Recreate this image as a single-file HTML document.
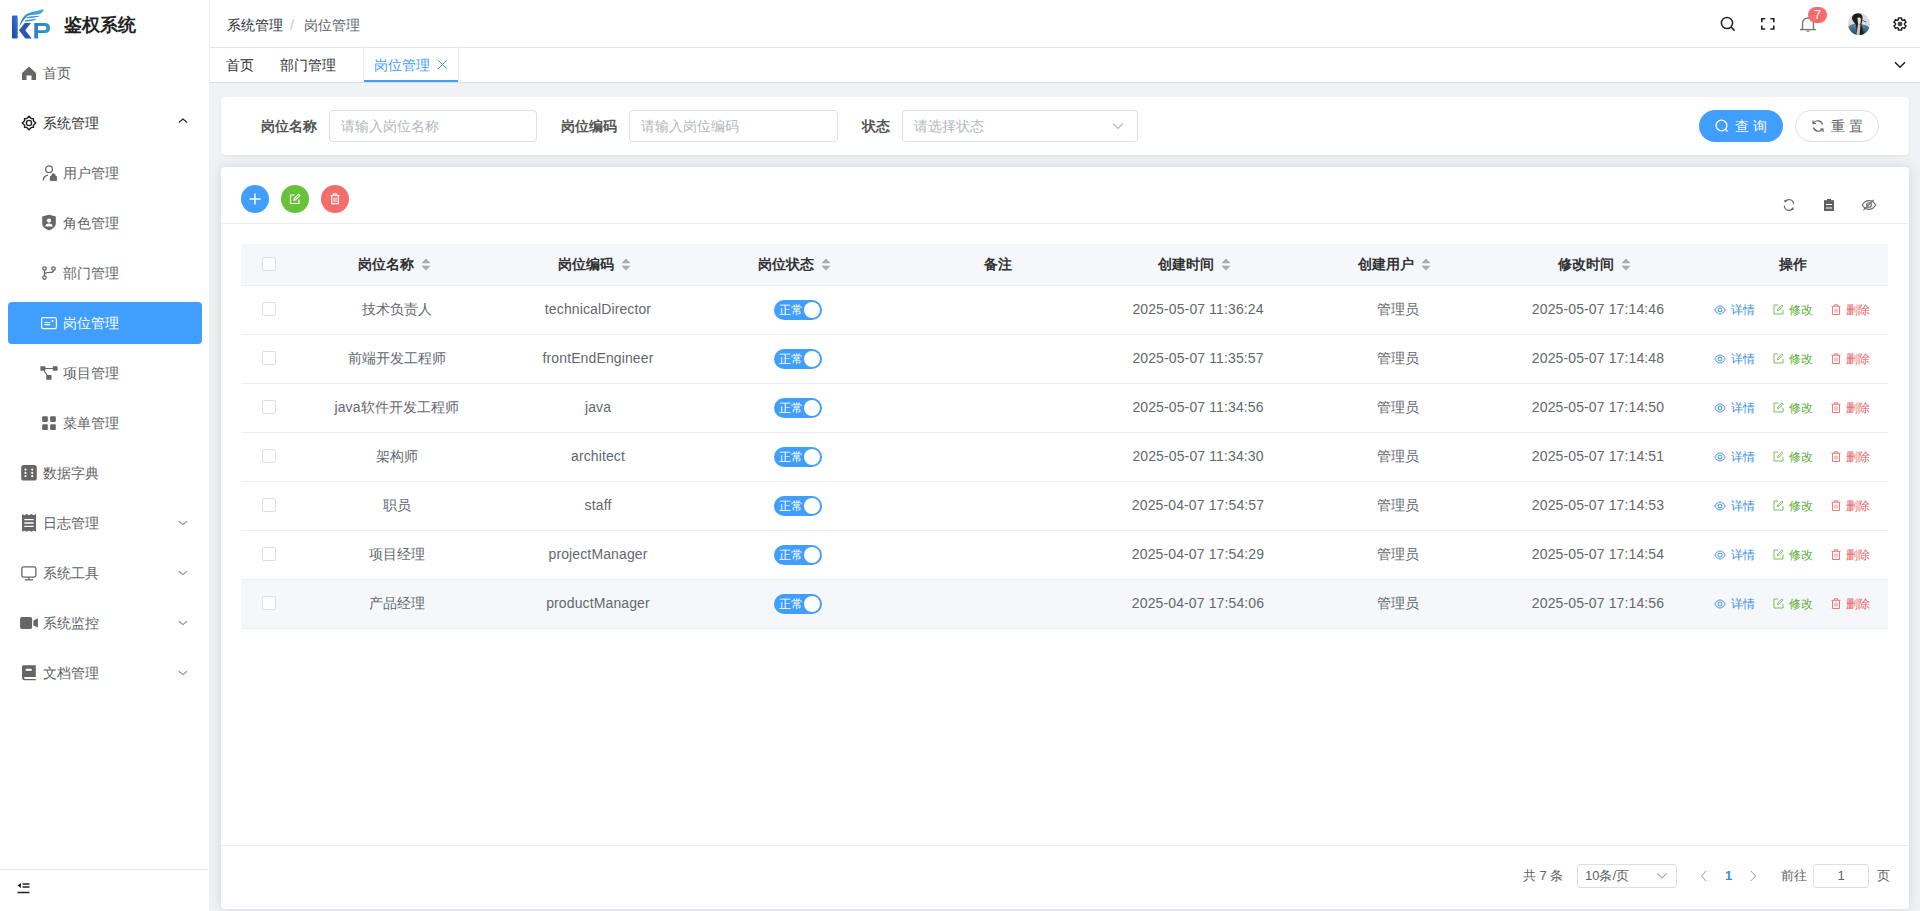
<!DOCTYPE html>
<html><head><meta charset="utf-8">
<style>
*{box-sizing:border-box;margin:0;padding:0}
html,body{width:1920px;height:911px;overflow:hidden;background:#f0f2f5;font-family:"Liberation Sans",sans-serif;color:#606266;font-size:14px}
.abs{position:absolute}
#side{position:absolute;left:0;top:0;width:210px;height:911px;background:#fff;border-right:1px solid #eef0f2}
.logo-t{position:absolute;left:64px;top:12px;font-size:18px;font-weight:bold;color:#222;line-height:26px;letter-spacing:0}
.mi{position:absolute;left:0;width:209px;height:50px;line-height:50px;color:#606266;font-size:14px}
.mi .ic{position:absolute;top:18px;width:15px;height:15px}
.mi .tx{position:absolute;top:0}
.mi .ar{position:absolute;left:176px;top:20px;width:12px;height:10px}
.mi.act .bg{position:absolute;left:8px;top:4px;width:194px;height:42px;background:#409eff;border-radius:4px}
#hdr{position:absolute;left:210px;top:0;width:1711px;height:48px;background:#fff;border-bottom:1px solid #e6e6e6}
#tabs{position:absolute;left:210px;top:48px;width:1711px;height:35px;background:#fff;border-bottom:1px solid #dcdfe6}
.tab{position:absolute;top:0;height:34px;line-height:36px;font-size:14px;color:#303133}
.card{position:absolute;left:221px;width:1688px;background:#fff;border-radius:4px;box-shadow:0 0 10px rgba(0,0,0,.07)}
.lbl{position:absolute;top:117px;font-weight:bold;color:#555;font-size:14px;line-height:18px}
.inp{position:absolute;top:110px;height:32px;border:1px solid #dcdfe6;border-radius:4px;background:#fff;color:#b4b7bd;font-size:14px;line-height:30px;padding-left:11px}
.btn{position:absolute;top:110px;height:32px;border-radius:16px;font-size:14px;line-height:30px}
.circ{position:absolute;top:185px;width:28px;height:28px;border-radius:50%}
table{border-collapse:collapse}
.th{position:absolute;left:241px;top:244px;width:1647px;height:41px;background:#f5f7fa;border-bottom:1px solid #ebeef5}
.row{position:absolute;left:241px;width:1647px;height:49px;border-bottom:1px solid #ebeef5}
.c{position:absolute;top:0;text-align:center;white-space:nowrap}
.th .c{font-weight:bold;color:#333;line-height:41px}
.row .c{line-height:48px;color:#606266}
.cb{position:absolute;left:21px;width:14px;height:14px;border:1px solid #dcdfe6;border-radius:2px;background:#fff}
.sw{position:absolute;top:16px;left:78px;width:48px;height:18px;border-radius:9px;background:#409eff}
.sw .knob{position:absolute;right:1px;top:1px;width:16px;height:16px;border-radius:50%;background:#fff}
.sw .t{position:absolute;left:5px;top:0;line-height:18px;font-size:12px;color:#fff}
.op{position:absolute;top:0;line-height:48px;font-size:12px}
</style></head><body>

<!-- SIDEBAR -->
<div id="side">
  <svg class="abs" style="left:8px;top:4px" width="48" height="40" viewBox="0 0 48 40">
    <defs><linearGradient id="lg1" x1="0" y1="1" x2="1" y2="0"><stop offset="0" stop-color="#1f3fa6"/><stop offset="1" stop-color="#2f7fcf"/></linearGradient>
    <linearGradient id="lg2" x1="0" y1="1" x2="1" y2="0"><stop offset="0" stop-color="#2a73c9"/><stop offset="1" stop-color="#3cb6dc"/></linearGradient>
    <linearGradient id="lg3" x1="0" y1="0" x2="1" y2="0"><stop offset="0" stop-color="#2b7cc8"/><stop offset="1" stop-color="#2aa0d2"/></linearGradient></defs>
    <rect x="4" y="11.6" width="5.7" height="22.9" rx="1.2" fill="url(#lg1)"/>
    <path d="M16.7 18.9 H22.8 L17.3 26.3 L23.7 34.5 H17.3 L11 26.3 Z" fill="#2a55b3"/>
    <path d="M11.3 22.5 C13 16 15.5 11 21 9 C26 7.2 31 6.5 35.8 5 C35 8.5 33 10 29 10.6 C25 11 21 11.2 19 12.4 C16 15 13.5 19 11.3 22.5 Z" fill="url(#lg2)"/>
    <path d="M18.8 13.2 C22 12.2 27 12 32 11.8 C30.5 13.2 27 13.8 22 14 C20.5 14.1 19.5 14.3 18.8 14.6 Z" fill="#3a9fd8"/>
    <path d="M17.2 16.3 C20 15.6 24 15.3 28.5 15.2 C27.5 16.3 24 17 19 17.4 L16.6 17.6 Z" fill="#2f8fd2"/>
    <path d="M26.3 18.9 H36.5 C40.2 18.9 42.2 20.8 42.2 24 C42.2 27.2 40.2 29 36.5 29 H30.1 V34.5 H26.3 Z M30.1 21.9 V26.2 H36.4 C37.8 26.2 38.3 25.3 38.3 24 C38.3 22.7 37.8 21.9 36.4 21.9 Z" fill="url(#lg3)" fill-rule="evenodd"/>
  </svg>
  <div class="logo-t">鉴权系统</div>
<div class="mi" style="top:48px"><svg class="abs" style="left:21px;top:17px" width="16" height="16" viewBox="0 0 16 16"><path d="M1 8 L8 1.5 L15 8 V15 H10.5 V10.5 H5.5 V15 H1 Z" fill="#666"/></svg><span class="tx" style="left:43px;color:#606266">首页</span></div>
<div class="mi" style="top:98px"><svg class="abs" style="left:21px;top:17px" width="16" height="16" viewBox="0 0 16 16"><g fill="none" stroke="#222" stroke-width="1.4"><path d="M8 1.3 L10.3 3.6 H12.4 V5.7 L14.7 8 L12.4 10.3 V12.4 H10.3 L8 14.7 L5.7 12.4 H3.6 V10.3 L1.3 8 L3.6 5.7 V3.6 H5.7 Z"/><circle cx="8" cy="8" r="2.6"/></g></svg><span class="tx" style="left:43px;color:#303133">系统管理</span><svg class="abs" style="left:176px;top:20px" width="14" height="10" viewBox="0 0 14 10"><path d="M2.8 4.5 L7 1 L11 4.5" fill="none" stroke="#222" stroke-width="1.1"/></svg></div>
<div class="mi" style="top:148px"><svg class="abs" style="left:42px;top:17px" width="16" height="16" viewBox="0 0 16 16"><g fill="none" stroke="#666" stroke-width="1.3"><circle cx="7" cy="4.3" r="3.4"/><path d="M1.2 15.5 C1.5 12 3.5 10.6 6 10.2"/></g><path d="M8.3 11.5 h6.2 v4.2 h-6.2 z M9.6 11.5 v-1 a1.8 1.8 0 0 1 3.6 0 v1" fill="#666" stroke="#666" stroke-width="0.9"/></svg><span class="tx" style="left:63px;color:#606266">用户管理</span></div>
<div class="mi" style="top:198px"><svg class="abs" style="left:42px;top:16px" width="14" height="17" viewBox="0 0 14 17"><path d="M7 0.8 L13.8 2.6 V9.5 C13.8 12.8 10.5 15 7 16.4 C3.5 15 0.2 12.8 0.2 9.5 V2.6 Z" fill="#666"/><circle cx="7" cy="6.6" r="2.1" fill="#fff"/><path d="M3.3 12.4 C3.6 10.3 5 9.6 7 9.6 C9 9.6 10.4 10.3 10.7 12.4 Z" fill="#fff"/></svg><span class="tx" style="left:63px;color:#606266">角色管理</span></div>
<div class="mi" style="top:248px"><svg class="abs" style="left:41px;top:16px" width="16" height="18" viewBox="0 0 16 18"><g fill="none" stroke="#666" stroke-width="1.3"><circle cx="3.5" cy="4.5" r="1.7"/><circle cx="12.5" cy="4.5" r="1.7"/><circle cx="3.5" cy="13.6" r="1.7"/><path d="M3.5 6.2 V11.9 M3.5 9.8 C4.5 8.6 6 8.4 9 8.4 C11.5 8.4 12.5 7.5 12.5 6.2"/></g></svg><span class="tx" style="left:63px;color:#606266">部门管理</span></div>
<div class="mi act" style="top:298px"><div class="bg"></div><svg class="abs" style="left:41px;top:19px" width="16" height="13" viewBox="0 0 16 13"><g fill="none" stroke="#fff" stroke-width="1.2"><rect x="0.6" y="0.6" width="14.8" height="11" rx="1.6"/><path d="M3.4 5.5 H9.2 M3.4 7.6 H9.2"/></g><circle cx="11.5" cy="4.1" r="1" fill="#fff"/></svg><span class="tx" style="left:63px;color:#fff">岗位管理</span></div>
<div class="mi" style="top:348px"><svg class="abs" style="left:40px;top:18px" width="18" height="14" viewBox="0 0 18 14"><g fill="#666"><rect x="0.4" y="0.2" width="5" height="4.6" rx="0.6"/><rect x="12.8" y="0.2" width="4.8" height="4.6" rx="0.6"/><rect x="6.3" y="9" width="5.2" height="4.8" rx="0.6"/></g><path d="M5 2.5 H13 M4 4.5 L7 9" stroke="#666" stroke-width="1.1"/></svg><span class="tx" style="left:63px;color:#606266">项目管理</span></div>
<div class="mi" style="top:398px"><svg class="abs" style="left:42px;top:18px" width="14" height="15" viewBox="0 0 14 15"><g fill="#666"><rect x="0.2" y="0.3" width="5.6" height="5.6" rx="0.8"/><rect x="8.2" y="0.3" width="5.6" height="5.6" rx="0.8"/><rect x="0.2" y="8.3" width="5.6" height="5.7" rx="0.8"/><rect x="8.2" y="8.3" width="5.6" height="5.7" rx="0.8"/></g></svg><span class="tx" style="left:63px;color:#606266">菜单管理</span></div>
<div class="mi" style="top:448px"><svg class="abs" style="left:21px;top:17px" width="16" height="16" viewBox="0 0 16 16"><rect x="0.2" y="0.1" width="15.6" height="15.5" rx="2.6" fill="#666"/><g fill="#fff"><circle cx="4.5" cy="4.6" r="1.1"/><circle cx="11.2" cy="4.6" r="1.1"/><circle cx="4.5" cy="7.9" r="1.1"/><circle cx="11.2" cy="7.9" r="1.1"/><circle cx="4.5" cy="11.2" r="1.1"/><circle cx="11.2" cy="11.2" r="1.1"/></g></svg><span class="tx" style="left:43px;color:#606266">数据字典</span></div>
<div class="mi" style="top:498px"><svg class="abs" style="left:22px;top:16px" width="14" height="18" viewBox="0 0 14 18"><path d="M0 0 L2.3 1.3 L4.7 0 L7 1.3 L9.3 0 L11.7 1.3 L14 0 V17.7 L11.7 16.4 L9.3 17.7 L7 16.4 L4.7 17.7 L2.3 16.4 L0 17.7 Z" fill="#666"/><path d="M2.3 5.6 H11.7 M2.3 9 H11.7 M2.3 12.3 H11.7" stroke="#fff" stroke-width="1.3"/></svg><span class="tx" style="left:43px;color:#606266">日志管理</span><svg class="abs" style="left:176px;top:20px" width="14" height="10" viewBox="0 0 14 10"><path d="M2.8 3.3 L7 6.6 L11 3.1" fill="none" stroke="#888" stroke-width="1.1"/></svg></div>
<div class="mi" style="top:548px"><svg class="abs" style="left:21px;top:18px" width="16" height="15" viewBox="0 0 16 15"><g fill="none" stroke="#666" stroke-width="1.3"><rect x="0.85" y="0.85" width="14" height="10.2" rx="1.8"/><path d="M7.85 11 V13.6 M3.7 13.9 H12"/></g></svg><span class="tx" style="left:43px;color:#606266">系统工具</span><svg class="abs" style="left:176px;top:20px" width="14" height="10" viewBox="0 0 14 10"><path d="M2.8 3.3 L7 6.6 L11 3.1" fill="none" stroke="#888" stroke-width="1.1"/></svg></div>
<div class="mi" style="top:598px"><svg class="abs" style="left:20px;top:19px" width="18" height="12" viewBox="0 0 18 12"><rect x="0.1" y="0.1" width="12" height="11.8" rx="1.6" fill="#666"/><path d="M13.4 3.6 L17.9 1.3 V10.6 L13.4 8.4 Z" fill="#666"/></svg><span class="tx" style="left:43px;color:#606266">系统监控</span><svg class="abs" style="left:176px;top:20px" width="14" height="10" viewBox="0 0 14 10"><path d="M2.8 3.3 L7 6.6 L11 3.1" fill="none" stroke="#888" stroke-width="1.1"/></svg></div>
<div class="mi" style="top:648px"><svg class="abs" style="left:22px;top:17px" width="14" height="16" viewBox="0 0 14 16"><path d="M1.6 0.2 H13.8 V12 H3.5 C2.3 12 2.1 12.6 2.1 13 C2.1 13.5 2.4 13.9 3.4 13.9 H13.8 V15.2 H3 C1 15.2 0 14.2 0 12.5 V1.8 C0 0.8 0.6 0.2 1.6 0.2 Z" fill="#666"/><rect x="3.7" y="3.8" width="6" height="2" fill="#fff"/></svg><span class="tx" style="left:43px;color:#606266">文档管理</span><svg class="abs" style="left:176px;top:20px" width="14" height="10" viewBox="0 0 14 10"><path d="M2.8 3.3 L7 6.6 L11 3.1" fill="none" stroke="#888" stroke-width="1.1"/></svg></div>
<div class="abs" style="left:0;top:869px;width:208px;height:1px;background:#e6ebf2"></div><svg class="abs" style="left:16px;top:880px" width="16" height="16" viewBox="0 0 16 16"><path d="M1.5 5.5 L5 3 V8 Z" fill="#222"/><path d="M6.5 4 H13.5 M6.5 7 H13.5 M1.5 12.5 H13.5" stroke="#222" stroke-width="1.4"/></svg>
</div>

<!-- HEADER -->
<div id="hdr"></div>
<div id="tabs"></div>
<div class="abs" style="left:227px;top:15px;line-height:20px;font-size:14px;color:#303133">系统管理</div><div class="abs" style="left:290px;top:15px;line-height:20px;font-size:14px;color:#c0c4cc">/</div><div class="abs" style="left:304px;top:15px;line-height:20px;font-size:14px;color:#606266">岗位管理</div><svg class="abs" style="left:1720px;top:16px" width="16" height="16" viewBox="0 0 16 16"><circle cx="7" cy="7" r="5.6" fill="none" stroke="#222" stroke-width="1.5"/><path d="M11 11 L14.6 14.6" stroke="#222" stroke-width="1.6"/></svg><svg class="abs" style="left:1760px;top:17px" width="16" height="14" viewBox="0 0 16 14"><path d="M1.8 5.2 V1.8 H5.2 M10.4 1.8 H13.8 V5.2 M13.8 8.6 V12 H10.4 M5.2 12 H1.8 V8.6" fill="none" stroke="#222" stroke-width="1.6"/></svg><svg class="abs" style="left:1799px;top:15px" width="18" height="18" viewBox="0 0 18 18"><path d="M3.5 14.5 V8.5 C3.5 5.2 5.8 3 9 3 C12.2 3 14.5 5.2 14.5 8.5 V14.5" fill="none" stroke="#777" stroke-width="1.4"/><path d="M1 14.6 H17" stroke="#777" stroke-width="1.4"/><path d="M7.6 16.2 H10.4" stroke="#777" stroke-width="1.2"/></svg><div class="abs" style="left:1808px;top:7px;width:19px;height:16px;border-radius:8px;background:#f56c6c;color:#fff;font-size:12px;line-height:16px;text-align:center">7</div><svg class="abs" style="left:1848px;top:13px" width="22" height="22" viewBox="0 0 22 22"><defs><clipPath id="av"><circle cx="11" cy="11" r="11"/></clipPath><linearGradient id="coat" x1="0" y1="0" x2="0" y2="1"><stop offset="0" stop-color="#5b8ea3"/><stop offset="1" stop-color="#24475a"/></linearGradient></defs><g clip-path="url(#av)"><rect width="22" height="22" fill="#dcdedd"/><path d="M0 14 C2 11.5 5 11 8 11 L15 11.5 C18 12 21 13 22 16 V22 H0 Z" fill="url(#coat)"/><path d="M4 5.5 C4 2 7 0 10.5 0.3 C13.5 0.6 15 2.5 14.5 6 L13.5 11 L16 22 H9 L8 12 C6.5 10 4.5 8 4 5.5 Z" fill="#1e1e1e"/><path d="M9.5 5 C10.5 4.2 12.5 4.5 13 6 L12.5 10 C12 11.5 10.5 11.5 10 10.5 Z" fill="#e6e2d8"/><path d="M10 11 L12.5 11.5 L11.5 22 H8.5 Z" fill="#cfcbbd"/><path d="M13 7 C15 7.5 17 8.5 18.5 9" stroke="#333" stroke-width="0.7" fill="none"/></g></svg><svg class="abs" style="left:1892px;top:16px" width="16" height="16" viewBox="0 0 16 16"><path d="M6.28 3.73 L6.48 1.89 L9.52 1.89 L9.72 3.73 L10.83 4.38 L12.53 3.62 L14.06 6.26 L12.56 7.36 L12.56 8.64 L14.06 9.74 L12.53 12.38 L10.83 11.62 L9.72 12.27 L9.52 14.11 L6.48 14.11 L6.28 12.27 L5.17 11.62 L3.47 12.38 L1.94 9.74 L3.44 8.64 L3.44 7.36 L1.94 6.26 L3.47 3.62 L5.17 4.38 Z" fill="none" stroke="#222" stroke-width="1.5" stroke-linejoin="round"/><circle cx="8" cy="8" r="1.9" fill="#444" stroke="#222" stroke-width="0.8"/></svg>
<div class="abs" style="left:226px;top:55px;line-height:20px;font-size:14px;color:#303133">首页</div><div class="abs" style="left:280px;top:55px;line-height:20px;font-size:14px;color:#303133">部门管理</div><div class="abs" style="left:363px;top:47px;width:96px;height:35px;border-left:1px solid #eef0f3;border-right:1px solid #eef0f3"></div><div class="abs" style="left:374px;top:55px;line-height:20px;font-size:14px;color:#409eff">岗位管理</div><svg class="abs" style="left:437px;top:59px" width="11" height="11" viewBox="0 0 11 11"><path d="M1.2 1.2 L9.8 9.8 M9.8 1.2 L1.2 9.8" stroke="#3f92e6" stroke-width="1"/></svg><div class="abs" style="left:364px;top:80px;width:94px;height:2px;background:#409eff"></div><svg class="abs" style="left:1893px;top:60px" width="14" height="10" viewBox="0 0 14 10"><path d="M2 2.2 L7 7.2 L12 2.2" fill="none" stroke="#222" stroke-width="1.6"/></svg>

<div class="card" style="top:97px;height:58px;box-shadow:0 1px 3px rgba(0,0,0,.07)"></div><div class="card" style="top:167px;height:742px;box-shadow:0 0 14px rgba(0,0,0,.12)"></div><div class="lbl" style="left:261px">岗位名称</div><div class="inp" style="left:329px;width:208px">请输入岗位名称</div><div class="lbl" style="left:561px">岗位编码</div><div class="inp" style="left:629px;width:209px">请输入岗位编码</div><div class="lbl" style="left:862px">状态</div><div class="inp" style="left:902px;width:236px">请选择状态</div><svg class="abs" style="left:1111px;top:120px" width="14" height="12" viewBox="0 0 14 12"><path d="M2 3.5 L7 8.5 L12 3.5" fill="none" stroke="#b4b7bd" stroke-width="1.1"/></svg><div class="btn" style="left:1699px;width:84px;background:#409eff;color:#fff"></div><svg class="abs" style="left:1714px;top:118px" width="16" height="16" viewBox="0 0 16 16"><circle cx="7.5" cy="7.5" r="5.4" fill="none" stroke="#fff" stroke-width="1.3"/><path d="M11.3 11.3 L13.5 13.5" stroke="#fff" stroke-width="1.3"/></svg><div class="abs" style="left:1735px;top:116px;line-height:20px;font-size:14px;color:#fff;letter-spacing:4px">查询</div><div class="btn" style="left:1795px;width:84px;background:#fff;border:1px solid #dcdfe6"></div><svg class="abs" style="left:1810px;top:118px" width="16" height="16" viewBox="0 0 16 16"><path d="M12.5 6.5 A5 5 0 0 0 3.5 5 M3.5 9.5 A5 5 0 0 0 12.5 11" fill="none" stroke="#606266" stroke-width="1.2"/><path d="M3 2.5 V5.5 H6" fill="none" stroke="#606266" stroke-width="1.2"/><path d="M13 14 V11 H10" fill="none" stroke="#606266" stroke-width="1.2"/></svg><div class="abs" style="left:1831px;top:116px;line-height:20px;font-size:14px;color:#606266;letter-spacing:4px">重置</div><div class="circ" style="left:241px;background:#409eff"></div><svg class="abs" style="left:248px;top:192px" width="14" height="14" viewBox="0 0 14 14"><path d="M7 1.5 V12.5 M1.5 7 H12.5" stroke="#fff" stroke-width="1.4"/></svg><div class="circ" style="left:281px;background:#67c23a"></div><svg class="abs" style="left:289px;top:193px" width="12" height="12" viewBox="0 0 12 12"><path d="M5.5 2 H1.5 V10.5 H10 V6.5" fill="none" stroke="#fff" stroke-width="1.2"/><path d="M5 7.2 L5.3 5.5 L9.5 1.3 L10.8 2.6 L6.6 6.8 Z" fill="none" stroke="#fff" stroke-width="1.1"/></svg><div class="circ" style="left:321px;background:#f56c6c"></div><svg class="abs" style="left:329px;top:192px" width="12" height="14" viewBox="0 0 12 14"><path d="M1.5 3.5 H10.5 M4.5 3.2 V1.8 H7.5 V3.2" fill="none" stroke="#fff" stroke-width="1.2"/><path d="M2.7 4 V11.6 H9.3 V4" fill="none" stroke="#fff" stroke-width="1.2"/><path d="M5 5.5 V10 M7 5.5 V10" stroke="#fff" stroke-width="1"/></svg><svg class="abs" style="left:1782px;top:197px" width="14" height="16" viewBox="0 0 14 16"><path d="M3.2 4.6 A4.6 4.6 0 0 1 11.6 7.2 M10.8 11.4 A4.6 4.6 0 0 1 2.4 8.6" fill="none" stroke="#666" stroke-width="1.2"/><path d="M2 3 L5.2 3.6 L3 6 Z" fill="#666"/><path d="M12 13 L8.8 12.4 L11 10 Z" fill="#666"/></svg><svg class="abs" style="left:1822px;top:197px" width="14" height="16" viewBox="0 0 14 16"><path d="M2 3.2 H12 V14 H2 Z" fill="#5f6063"/><rect x="5" y="2" width="4" height="2" fill="#5f6063"/><path d="M4 7.5 H10 M4 11 H10" stroke="#fff" stroke-width="1.1"/></svg><svg class="abs" style="left:1860px;top:197px" width="18" height="16" viewBox="0 0 18 16"><path d="M2.2 8 C4 5 6 3.6 9 3.6 C12 3.6 14 5 15.8 8 C14 11 12 12.4 9 12.4 C6 12.4 4 11 2.2 8 Z" fill="none" stroke="#666" stroke-width="1.1"/><circle cx="9" cy="8" r="2.3" fill="none" stroke="#666" stroke-width="1.1"/><path d="M3.5 13 L13.8 2.8" stroke="#666" stroke-width="1.1"/></svg><div class="abs" style="left:221px;top:223px;width:1688px;height:1px;background:#ebeef5"></div>
<div class="abs" style="left:241px;top:244px;width:1647px;height:42px;background:#f5f7fa;border-bottom:1px solid #ebeef5"></div><div class="cb" style="left:262px;top:257px"></div><div class="abs" style="left:358.0px;top:254px;line-height:20px;font-weight:bold;color:#303133;font-size:14px">岗位名称<svg width="10" height="13" viewBox="0 0 10 13" style="position:absolute;left:63px;top:4px"><path d="M5 0.5 L9.5 5.3 H0.5 Z M5 12.5 L9.5 7.7 H0.5 Z" fill="#a8abb2"/></svg></div><div class="abs" style="left:558.0px;top:254px;line-height:20px;font-weight:bold;color:#303133;font-size:14px">岗位编码<svg width="10" height="13" viewBox="0 0 10 13" style="position:absolute;left:63px;top:4px"><path d="M5 0.5 L9.5 5.3 H0.5 Z M5 12.5 L9.5 7.7 H0.5 Z" fill="#a8abb2"/></svg></div><div class="abs" style="left:758.0px;top:254px;line-height:20px;font-weight:bold;color:#303133;font-size:14px">岗位状态<svg width="10" height="13" viewBox="0 0 10 13" style="position:absolute;left:63px;top:4px"><path d="M5 0.5 L9.5 5.3 H0.5 Z M5 12.5 L9.5 7.7 H0.5 Z" fill="#a8abb2"/></svg></div><div class="abs" style="left:984.0px;top:254px;line-height:20px;font-weight:bold;color:#303133;font-size:14px">备注</div><div class="abs" style="left:1158.0px;top:254px;line-height:20px;font-weight:bold;color:#303133;font-size:14px">创建时间<svg width="10" height="13" viewBox="0 0 10 13" style="position:absolute;left:63px;top:4px"><path d="M5 0.5 L9.5 5.3 H0.5 Z M5 12.5 L9.5 7.7 H0.5 Z" fill="#a8abb2"/></svg></div><div class="abs" style="left:1358.0px;top:254px;line-height:20px;font-weight:bold;color:#303133;font-size:14px">创建用户<svg width="10" height="13" viewBox="0 0 10 13" style="position:absolute;left:63px;top:4px"><path d="M5 0.5 L9.5 5.3 H0.5 Z M5 12.5 L9.5 7.7 H0.5 Z" fill="#a8abb2"/></svg></div><div class="abs" style="left:1558.0px;top:254px;line-height:20px;font-weight:bold;color:#303133;font-size:14px">修改时间<svg width="10" height="13" viewBox="0 0 10 13" style="position:absolute;left:63px;top:4px"><path d="M5 0.5 L9.5 5.3 H0.5 Z M5 12.5 L9.5 7.7 H0.5 Z" fill="#a8abb2"/></svg></div><div class="abs" style="left:1779.0px;top:254px;line-height:20px;font-weight:bold;color:#303133;font-size:14px">操作</div><div class="abs" style="left:241px;top:286px;width:1647px;height:49px;background:#fff;border-bottom:1px solid #ebeef5"></div><div class="cb" style="left:262px;top:302px"></div><div class="abs" style="left:297px;top:299px;width:200px;line-height:20px;text-align:center;color:#65686d;font-size:14px;white-space:nowrap;letter-spacing:0.12px">技术负责人</div><div class="abs" style="left:498px;top:299px;width:200px;line-height:20px;text-align:center;color:#65686d;font-size:14px;white-space:nowrap;letter-spacing:0.12px">technicalDirector</div><div class="abs" style="left:1098px;top:299px;width:200px;line-height:20px;text-align:center;color:#65686d;font-size:14px;white-space:nowrap;letter-spacing:0.12px">2025-05-07 11:36:24</div><div class="abs" style="left:1298px;top:299px;width:200px;line-height:20px;text-align:center;color:#65686d;font-size:14px;white-space:nowrap;letter-spacing:0.12px">管理员</div><div class="abs" style="left:1498px;top:299px;width:200px;line-height:20px;text-align:center;color:#65686d;font-size:14px;white-space:nowrap;letter-spacing:0.12px">2025-05-07 17:14:46</div><div class="abs" style="left:774px;top:300px;width:48px;height:20px;border-radius:10px;background:#409eff"><span style="position:absolute;left:5px;top:2px;line-height:16px;font-size:12px;color:#fff">正常</span><span style="position:absolute;right:2px;top:2px;width:16px;height:16px;border-radius:50%;background:#fff"></span></div><svg class="abs" style="left:1714px;top:305px" width="12" height="10" viewBox="0 0 12 10"><path d="M0.8 5 C2.3 2.3 4 1 6 1 C8 1 9.7 2.3 11.2 5 C9.7 7.7 8 9 6 9 C4 9 2.3 7.7 0.8 5 Z" fill="none" stroke="#3f92e6" stroke-width="1"/><circle cx="6" cy="5" r="2" fill="none" stroke="#3f92e6" stroke-width="1"/></svg><div class="abs" style="left:1731px;top:301px;line-height:18px;font-size:12px;color:#3a8ee0">详情</div><svg class="abs" style="left:1773px;top:304px" width="11" height="11" viewBox="0 0 11 11"><path d="M5 1 H1 V10 H10 V6" fill="none" stroke="#6ab847" stroke-width="0.9"/><path d="M4.5 6.5 L4.8 5 L8.8 1 L10 2.2 L6 6.2 Z" fill="none" stroke="#6ab847" stroke-width="0.9"/></svg><div class="abs" style="left:1789px;top:301px;line-height:18px;font-size:12px;color:#5cae38">修改</div><svg class="abs" style="left:1831px;top:304px" width="10" height="11" viewBox="0 0 10 11"><path d="M0.5 2.3 H9.5 M3.3 2 V0.8 H6.7 V2" fill="none" stroke="#e86a6a" stroke-width="0.9"/><path d="M1.5 2.5 V10.5 H8.5 V2.5" fill="none" stroke="#e86a6a" stroke-width="0.9"/><path d="M4 4.5 V8.5 M6 4.5 V8.5" stroke="#e86a6a" stroke-width="0.8"/></svg><div class="abs" style="left:1846px;top:301px;line-height:18px;font-size:12px;color:#e46262">删除</div><div class="abs" style="left:241px;top:335px;width:1647px;height:49px;background:#fff;border-bottom:1px solid #ebeef5"></div><div class="cb" style="left:262px;top:351px"></div><div class="abs" style="left:297px;top:348px;width:200px;line-height:20px;text-align:center;color:#65686d;font-size:14px;white-space:nowrap;letter-spacing:0.12px">前端开发工程师</div><div class="abs" style="left:498px;top:348px;width:200px;line-height:20px;text-align:center;color:#65686d;font-size:14px;white-space:nowrap;letter-spacing:0.12px">frontEndEngineer</div><div class="abs" style="left:1098px;top:348px;width:200px;line-height:20px;text-align:center;color:#65686d;font-size:14px;white-space:nowrap;letter-spacing:0.12px">2025-05-07 11:35:57</div><div class="abs" style="left:1298px;top:348px;width:200px;line-height:20px;text-align:center;color:#65686d;font-size:14px;white-space:nowrap;letter-spacing:0.12px">管理员</div><div class="abs" style="left:1498px;top:348px;width:200px;line-height:20px;text-align:center;color:#65686d;font-size:14px;white-space:nowrap;letter-spacing:0.12px">2025-05-07 17:14:48</div><div class="abs" style="left:774px;top:349px;width:48px;height:20px;border-radius:10px;background:#409eff"><span style="position:absolute;left:5px;top:2px;line-height:16px;font-size:12px;color:#fff">正常</span><span style="position:absolute;right:2px;top:2px;width:16px;height:16px;border-radius:50%;background:#fff"></span></div><svg class="abs" style="left:1714px;top:354px" width="12" height="10" viewBox="0 0 12 10"><path d="M0.8 5 C2.3 2.3 4 1 6 1 C8 1 9.7 2.3 11.2 5 C9.7 7.7 8 9 6 9 C4 9 2.3 7.7 0.8 5 Z" fill="none" stroke="#3f92e6" stroke-width="1"/><circle cx="6" cy="5" r="2" fill="none" stroke="#3f92e6" stroke-width="1"/></svg><div class="abs" style="left:1731px;top:350px;line-height:18px;font-size:12px;color:#3a8ee0">详情</div><svg class="abs" style="left:1773px;top:353px" width="11" height="11" viewBox="0 0 11 11"><path d="M5 1 H1 V10 H10 V6" fill="none" stroke="#6ab847" stroke-width="0.9"/><path d="M4.5 6.5 L4.8 5 L8.8 1 L10 2.2 L6 6.2 Z" fill="none" stroke="#6ab847" stroke-width="0.9"/></svg><div class="abs" style="left:1789px;top:350px;line-height:18px;font-size:12px;color:#5cae38">修改</div><svg class="abs" style="left:1831px;top:353px" width="10" height="11" viewBox="0 0 10 11"><path d="M0.5 2.3 H9.5 M3.3 2 V0.8 H6.7 V2" fill="none" stroke="#e86a6a" stroke-width="0.9"/><path d="M1.5 2.5 V10.5 H8.5 V2.5" fill="none" stroke="#e86a6a" stroke-width="0.9"/><path d="M4 4.5 V8.5 M6 4.5 V8.5" stroke="#e86a6a" stroke-width="0.8"/></svg><div class="abs" style="left:1846px;top:350px;line-height:18px;font-size:12px;color:#e46262">删除</div><div class="abs" style="left:241px;top:384px;width:1647px;height:49px;background:#fff;border-bottom:1px solid #ebeef5"></div><div class="cb" style="left:262px;top:400px"></div><div class="abs" style="left:297px;top:397px;width:200px;line-height:20px;text-align:center;color:#65686d;font-size:14px;white-space:nowrap;letter-spacing:0.12px">java软件开发工程师</div><div class="abs" style="left:498px;top:397px;width:200px;line-height:20px;text-align:center;color:#65686d;font-size:14px;white-space:nowrap;letter-spacing:0.12px">java</div><div class="abs" style="left:1098px;top:397px;width:200px;line-height:20px;text-align:center;color:#65686d;font-size:14px;white-space:nowrap;letter-spacing:0.12px">2025-05-07 11:34:56</div><div class="abs" style="left:1298px;top:397px;width:200px;line-height:20px;text-align:center;color:#65686d;font-size:14px;white-space:nowrap;letter-spacing:0.12px">管理员</div><div class="abs" style="left:1498px;top:397px;width:200px;line-height:20px;text-align:center;color:#65686d;font-size:14px;white-space:nowrap;letter-spacing:0.12px">2025-05-07 17:14:50</div><div class="abs" style="left:774px;top:398px;width:48px;height:20px;border-radius:10px;background:#409eff"><span style="position:absolute;left:5px;top:2px;line-height:16px;font-size:12px;color:#fff">正常</span><span style="position:absolute;right:2px;top:2px;width:16px;height:16px;border-radius:50%;background:#fff"></span></div><svg class="abs" style="left:1714px;top:403px" width="12" height="10" viewBox="0 0 12 10"><path d="M0.8 5 C2.3 2.3 4 1 6 1 C8 1 9.7 2.3 11.2 5 C9.7 7.7 8 9 6 9 C4 9 2.3 7.7 0.8 5 Z" fill="none" stroke="#3f92e6" stroke-width="1"/><circle cx="6" cy="5" r="2" fill="none" stroke="#3f92e6" stroke-width="1"/></svg><div class="abs" style="left:1731px;top:399px;line-height:18px;font-size:12px;color:#3a8ee0">详情</div><svg class="abs" style="left:1773px;top:402px" width="11" height="11" viewBox="0 0 11 11"><path d="M5 1 H1 V10 H10 V6" fill="none" stroke="#6ab847" stroke-width="0.9"/><path d="M4.5 6.5 L4.8 5 L8.8 1 L10 2.2 L6 6.2 Z" fill="none" stroke="#6ab847" stroke-width="0.9"/></svg><div class="abs" style="left:1789px;top:399px;line-height:18px;font-size:12px;color:#5cae38">修改</div><svg class="abs" style="left:1831px;top:402px" width="10" height="11" viewBox="0 0 10 11"><path d="M0.5 2.3 H9.5 M3.3 2 V0.8 H6.7 V2" fill="none" stroke="#e86a6a" stroke-width="0.9"/><path d="M1.5 2.5 V10.5 H8.5 V2.5" fill="none" stroke="#e86a6a" stroke-width="0.9"/><path d="M4 4.5 V8.5 M6 4.5 V8.5" stroke="#e86a6a" stroke-width="0.8"/></svg><div class="abs" style="left:1846px;top:399px;line-height:18px;font-size:12px;color:#e46262">删除</div><div class="abs" style="left:241px;top:433px;width:1647px;height:49px;background:#fff;border-bottom:1px solid #ebeef5"></div><div class="cb" style="left:262px;top:449px"></div><div class="abs" style="left:297px;top:446px;width:200px;line-height:20px;text-align:center;color:#65686d;font-size:14px;white-space:nowrap;letter-spacing:0.12px">架构师</div><div class="abs" style="left:498px;top:446px;width:200px;line-height:20px;text-align:center;color:#65686d;font-size:14px;white-space:nowrap;letter-spacing:0.12px">architect</div><div class="abs" style="left:1098px;top:446px;width:200px;line-height:20px;text-align:center;color:#65686d;font-size:14px;white-space:nowrap;letter-spacing:0.12px">2025-05-07 11:34:30</div><div class="abs" style="left:1298px;top:446px;width:200px;line-height:20px;text-align:center;color:#65686d;font-size:14px;white-space:nowrap;letter-spacing:0.12px">管理员</div><div class="abs" style="left:1498px;top:446px;width:200px;line-height:20px;text-align:center;color:#65686d;font-size:14px;white-space:nowrap;letter-spacing:0.12px">2025-05-07 17:14:51</div><div class="abs" style="left:774px;top:447px;width:48px;height:20px;border-radius:10px;background:#409eff"><span style="position:absolute;left:5px;top:2px;line-height:16px;font-size:12px;color:#fff">正常</span><span style="position:absolute;right:2px;top:2px;width:16px;height:16px;border-radius:50%;background:#fff"></span></div><svg class="abs" style="left:1714px;top:452px" width="12" height="10" viewBox="0 0 12 10"><path d="M0.8 5 C2.3 2.3 4 1 6 1 C8 1 9.7 2.3 11.2 5 C9.7 7.7 8 9 6 9 C4 9 2.3 7.7 0.8 5 Z" fill="none" stroke="#3f92e6" stroke-width="1"/><circle cx="6" cy="5" r="2" fill="none" stroke="#3f92e6" stroke-width="1"/></svg><div class="abs" style="left:1731px;top:448px;line-height:18px;font-size:12px;color:#3a8ee0">详情</div><svg class="abs" style="left:1773px;top:451px" width="11" height="11" viewBox="0 0 11 11"><path d="M5 1 H1 V10 H10 V6" fill="none" stroke="#6ab847" stroke-width="0.9"/><path d="M4.5 6.5 L4.8 5 L8.8 1 L10 2.2 L6 6.2 Z" fill="none" stroke="#6ab847" stroke-width="0.9"/></svg><div class="abs" style="left:1789px;top:448px;line-height:18px;font-size:12px;color:#5cae38">修改</div><svg class="abs" style="left:1831px;top:451px" width="10" height="11" viewBox="0 0 10 11"><path d="M0.5 2.3 H9.5 M3.3 2 V0.8 H6.7 V2" fill="none" stroke="#e86a6a" stroke-width="0.9"/><path d="M1.5 2.5 V10.5 H8.5 V2.5" fill="none" stroke="#e86a6a" stroke-width="0.9"/><path d="M4 4.5 V8.5 M6 4.5 V8.5" stroke="#e86a6a" stroke-width="0.8"/></svg><div class="abs" style="left:1846px;top:448px;line-height:18px;font-size:12px;color:#e46262">删除</div><div class="abs" style="left:241px;top:482px;width:1647px;height:49px;background:#fff;border-bottom:1px solid #ebeef5"></div><div class="cb" style="left:262px;top:498px"></div><div class="abs" style="left:297px;top:495px;width:200px;line-height:20px;text-align:center;color:#65686d;font-size:14px;white-space:nowrap;letter-spacing:0.12px">职员</div><div class="abs" style="left:498px;top:495px;width:200px;line-height:20px;text-align:center;color:#65686d;font-size:14px;white-space:nowrap;letter-spacing:0.12px">staff</div><div class="abs" style="left:1098px;top:495px;width:200px;line-height:20px;text-align:center;color:#65686d;font-size:14px;white-space:nowrap;letter-spacing:0.12px">2025-04-07 17:54:57</div><div class="abs" style="left:1298px;top:495px;width:200px;line-height:20px;text-align:center;color:#65686d;font-size:14px;white-space:nowrap;letter-spacing:0.12px">管理员</div><div class="abs" style="left:1498px;top:495px;width:200px;line-height:20px;text-align:center;color:#65686d;font-size:14px;white-space:nowrap;letter-spacing:0.12px">2025-05-07 17:14:53</div><div class="abs" style="left:774px;top:496px;width:48px;height:20px;border-radius:10px;background:#409eff"><span style="position:absolute;left:5px;top:2px;line-height:16px;font-size:12px;color:#fff">正常</span><span style="position:absolute;right:2px;top:2px;width:16px;height:16px;border-radius:50%;background:#fff"></span></div><svg class="abs" style="left:1714px;top:501px" width="12" height="10" viewBox="0 0 12 10"><path d="M0.8 5 C2.3 2.3 4 1 6 1 C8 1 9.7 2.3 11.2 5 C9.7 7.7 8 9 6 9 C4 9 2.3 7.7 0.8 5 Z" fill="none" stroke="#3f92e6" stroke-width="1"/><circle cx="6" cy="5" r="2" fill="none" stroke="#3f92e6" stroke-width="1"/></svg><div class="abs" style="left:1731px;top:497px;line-height:18px;font-size:12px;color:#3a8ee0">详情</div><svg class="abs" style="left:1773px;top:500px" width="11" height="11" viewBox="0 0 11 11"><path d="M5 1 H1 V10 H10 V6" fill="none" stroke="#6ab847" stroke-width="0.9"/><path d="M4.5 6.5 L4.8 5 L8.8 1 L10 2.2 L6 6.2 Z" fill="none" stroke="#6ab847" stroke-width="0.9"/></svg><div class="abs" style="left:1789px;top:497px;line-height:18px;font-size:12px;color:#5cae38">修改</div><svg class="abs" style="left:1831px;top:500px" width="10" height="11" viewBox="0 0 10 11"><path d="M0.5 2.3 H9.5 M3.3 2 V0.8 H6.7 V2" fill="none" stroke="#e86a6a" stroke-width="0.9"/><path d="M1.5 2.5 V10.5 H8.5 V2.5" fill="none" stroke="#e86a6a" stroke-width="0.9"/><path d="M4 4.5 V8.5 M6 4.5 V8.5" stroke="#e86a6a" stroke-width="0.8"/></svg><div class="abs" style="left:1846px;top:497px;line-height:18px;font-size:12px;color:#e46262">删除</div><div class="abs" style="left:241px;top:531px;width:1647px;height:49px;background:#fff;border-bottom:1px solid #ebeef5"></div><div class="cb" style="left:262px;top:547px"></div><div class="abs" style="left:297px;top:544px;width:200px;line-height:20px;text-align:center;color:#65686d;font-size:14px;white-space:nowrap;letter-spacing:0.12px">项目经理</div><div class="abs" style="left:498px;top:544px;width:200px;line-height:20px;text-align:center;color:#65686d;font-size:14px;white-space:nowrap;letter-spacing:0.12px">projectManager</div><div class="abs" style="left:1098px;top:544px;width:200px;line-height:20px;text-align:center;color:#65686d;font-size:14px;white-space:nowrap;letter-spacing:0.12px">2025-04-07 17:54:29</div><div class="abs" style="left:1298px;top:544px;width:200px;line-height:20px;text-align:center;color:#65686d;font-size:14px;white-space:nowrap;letter-spacing:0.12px">管理员</div><div class="abs" style="left:1498px;top:544px;width:200px;line-height:20px;text-align:center;color:#65686d;font-size:14px;white-space:nowrap;letter-spacing:0.12px">2025-05-07 17:14:54</div><div class="abs" style="left:774px;top:545px;width:48px;height:20px;border-radius:10px;background:#409eff"><span style="position:absolute;left:5px;top:2px;line-height:16px;font-size:12px;color:#fff">正常</span><span style="position:absolute;right:2px;top:2px;width:16px;height:16px;border-radius:50%;background:#fff"></span></div><svg class="abs" style="left:1714px;top:550px" width="12" height="10" viewBox="0 0 12 10"><path d="M0.8 5 C2.3 2.3 4 1 6 1 C8 1 9.7 2.3 11.2 5 C9.7 7.7 8 9 6 9 C4 9 2.3 7.7 0.8 5 Z" fill="none" stroke="#3f92e6" stroke-width="1"/><circle cx="6" cy="5" r="2" fill="none" stroke="#3f92e6" stroke-width="1"/></svg><div class="abs" style="left:1731px;top:546px;line-height:18px;font-size:12px;color:#3a8ee0">详情</div><svg class="abs" style="left:1773px;top:549px" width="11" height="11" viewBox="0 0 11 11"><path d="M5 1 H1 V10 H10 V6" fill="none" stroke="#6ab847" stroke-width="0.9"/><path d="M4.5 6.5 L4.8 5 L8.8 1 L10 2.2 L6 6.2 Z" fill="none" stroke="#6ab847" stroke-width="0.9"/></svg><div class="abs" style="left:1789px;top:546px;line-height:18px;font-size:12px;color:#5cae38">修改</div><svg class="abs" style="left:1831px;top:549px" width="10" height="11" viewBox="0 0 10 11"><path d="M0.5 2.3 H9.5 M3.3 2 V0.8 H6.7 V2" fill="none" stroke="#e86a6a" stroke-width="0.9"/><path d="M1.5 2.5 V10.5 H8.5 V2.5" fill="none" stroke="#e86a6a" stroke-width="0.9"/><path d="M4 4.5 V8.5 M6 4.5 V8.5" stroke="#e86a6a" stroke-width="0.8"/></svg><div class="abs" style="left:1846px;top:546px;line-height:18px;font-size:12px;color:#e46262">删除</div><div class="abs" style="left:241px;top:580px;width:1647px;height:49px;background:#f5f7fa;border-bottom:1px solid #ebeef5"></div><div class="cb" style="left:262px;top:596px"></div><div class="abs" style="left:297px;top:593px;width:200px;line-height:20px;text-align:center;color:#65686d;font-size:14px;white-space:nowrap;letter-spacing:0.12px">产品经理</div><div class="abs" style="left:498px;top:593px;width:200px;line-height:20px;text-align:center;color:#65686d;font-size:14px;white-space:nowrap;letter-spacing:0.12px">productManager</div><div class="abs" style="left:1098px;top:593px;width:200px;line-height:20px;text-align:center;color:#65686d;font-size:14px;white-space:nowrap;letter-spacing:0.12px">2025-04-07 17:54:06</div><div class="abs" style="left:1298px;top:593px;width:200px;line-height:20px;text-align:center;color:#65686d;font-size:14px;white-space:nowrap;letter-spacing:0.12px">管理员</div><div class="abs" style="left:1498px;top:593px;width:200px;line-height:20px;text-align:center;color:#65686d;font-size:14px;white-space:nowrap;letter-spacing:0.12px">2025-05-07 17:14:56</div><div class="abs" style="left:774px;top:594px;width:48px;height:20px;border-radius:10px;background:#409eff"><span style="position:absolute;left:5px;top:2px;line-height:16px;font-size:12px;color:#fff">正常</span><span style="position:absolute;right:2px;top:2px;width:16px;height:16px;border-radius:50%;background:#fff"></span></div><svg class="abs" style="left:1714px;top:599px" width="12" height="10" viewBox="0 0 12 10"><path d="M0.8 5 C2.3 2.3 4 1 6 1 C8 1 9.7 2.3 11.2 5 C9.7 7.7 8 9 6 9 C4 9 2.3 7.7 0.8 5 Z" fill="none" stroke="#3f92e6" stroke-width="1"/><circle cx="6" cy="5" r="2" fill="none" stroke="#3f92e6" stroke-width="1"/></svg><div class="abs" style="left:1731px;top:595px;line-height:18px;font-size:12px;color:#3a8ee0">详情</div><svg class="abs" style="left:1773px;top:598px" width="11" height="11" viewBox="0 0 11 11"><path d="M5 1 H1 V10 H10 V6" fill="none" stroke="#6ab847" stroke-width="0.9"/><path d="M4.5 6.5 L4.8 5 L8.8 1 L10 2.2 L6 6.2 Z" fill="none" stroke="#6ab847" stroke-width="0.9"/></svg><div class="abs" style="left:1789px;top:595px;line-height:18px;font-size:12px;color:#5cae38">修改</div><svg class="abs" style="left:1831px;top:598px" width="10" height="11" viewBox="0 0 10 11"><path d="M0.5 2.3 H9.5 M3.3 2 V0.8 H6.7 V2" fill="none" stroke="#e86a6a" stroke-width="0.9"/><path d="M1.5 2.5 V10.5 H8.5 V2.5" fill="none" stroke="#e86a6a" stroke-width="0.9"/><path d="M4 4.5 V8.5 M6 4.5 V8.5" stroke="#e86a6a" stroke-width="0.8"/></svg><div class="abs" style="left:1846px;top:595px;line-height:18px;font-size:12px;color:#e46262">删除</div><div class="abs" style="left:221px;top:845px;width:1688px;height:1px;background:#ebeef5"></div><div class="abs" style="left:1523px;top:866px;line-height:20px;font-size:13px;color:#606266">共 7 条</div><div class="abs" style="left:1577px;top:864px;width:100px;height:24px;border:1px solid #dcdfe6;border-radius:3px;background:#fff;padding-left:7px;line-height:22px;font-size:13px;color:#606266">10条/页</div><svg class="abs" style="left:1656px;top:871px" width="12" height="10" viewBox="0 0 12 10"><path d="M1.5 2.5 L6 7 L10.5 2.5" fill="none" stroke="#a8abb2" stroke-width="1.1"/></svg><svg class="abs" style="left:1699px;top:869px" width="10" height="14" viewBox="0 0 10 14"><path d="M7 2 L2.5 7 L7 12" fill="none" stroke="#a8abb2" stroke-width="1.1"/></svg><div class="abs" style="left:1725px;top:866px;line-height:20px;font-size:13px;font-weight:bold;color:#3a8ee0">1</div><svg class="abs" style="left:1748px;top:869px" width="10" height="14" viewBox="0 0 10 14"><path d="M3 2 L7.5 7 L3 12" fill="none" stroke="#a8abb2" stroke-width="1.1"/></svg><div class="abs" style="left:1781px;top:866px;line-height:20px;font-size:13px;color:#606266">前往</div><div class="abs" style="left:1813px;top:864px;width:56px;height:24px;border:1px solid #dcdfe6;border-radius:3px;background:#fff;text-align:center;line-height:22px;font-size:13px;color:#606266">1</div><div class="abs" style="left:1877px;top:866px;line-height:20px;font-size:13px;color:#606266">页</div>
</body></html>
